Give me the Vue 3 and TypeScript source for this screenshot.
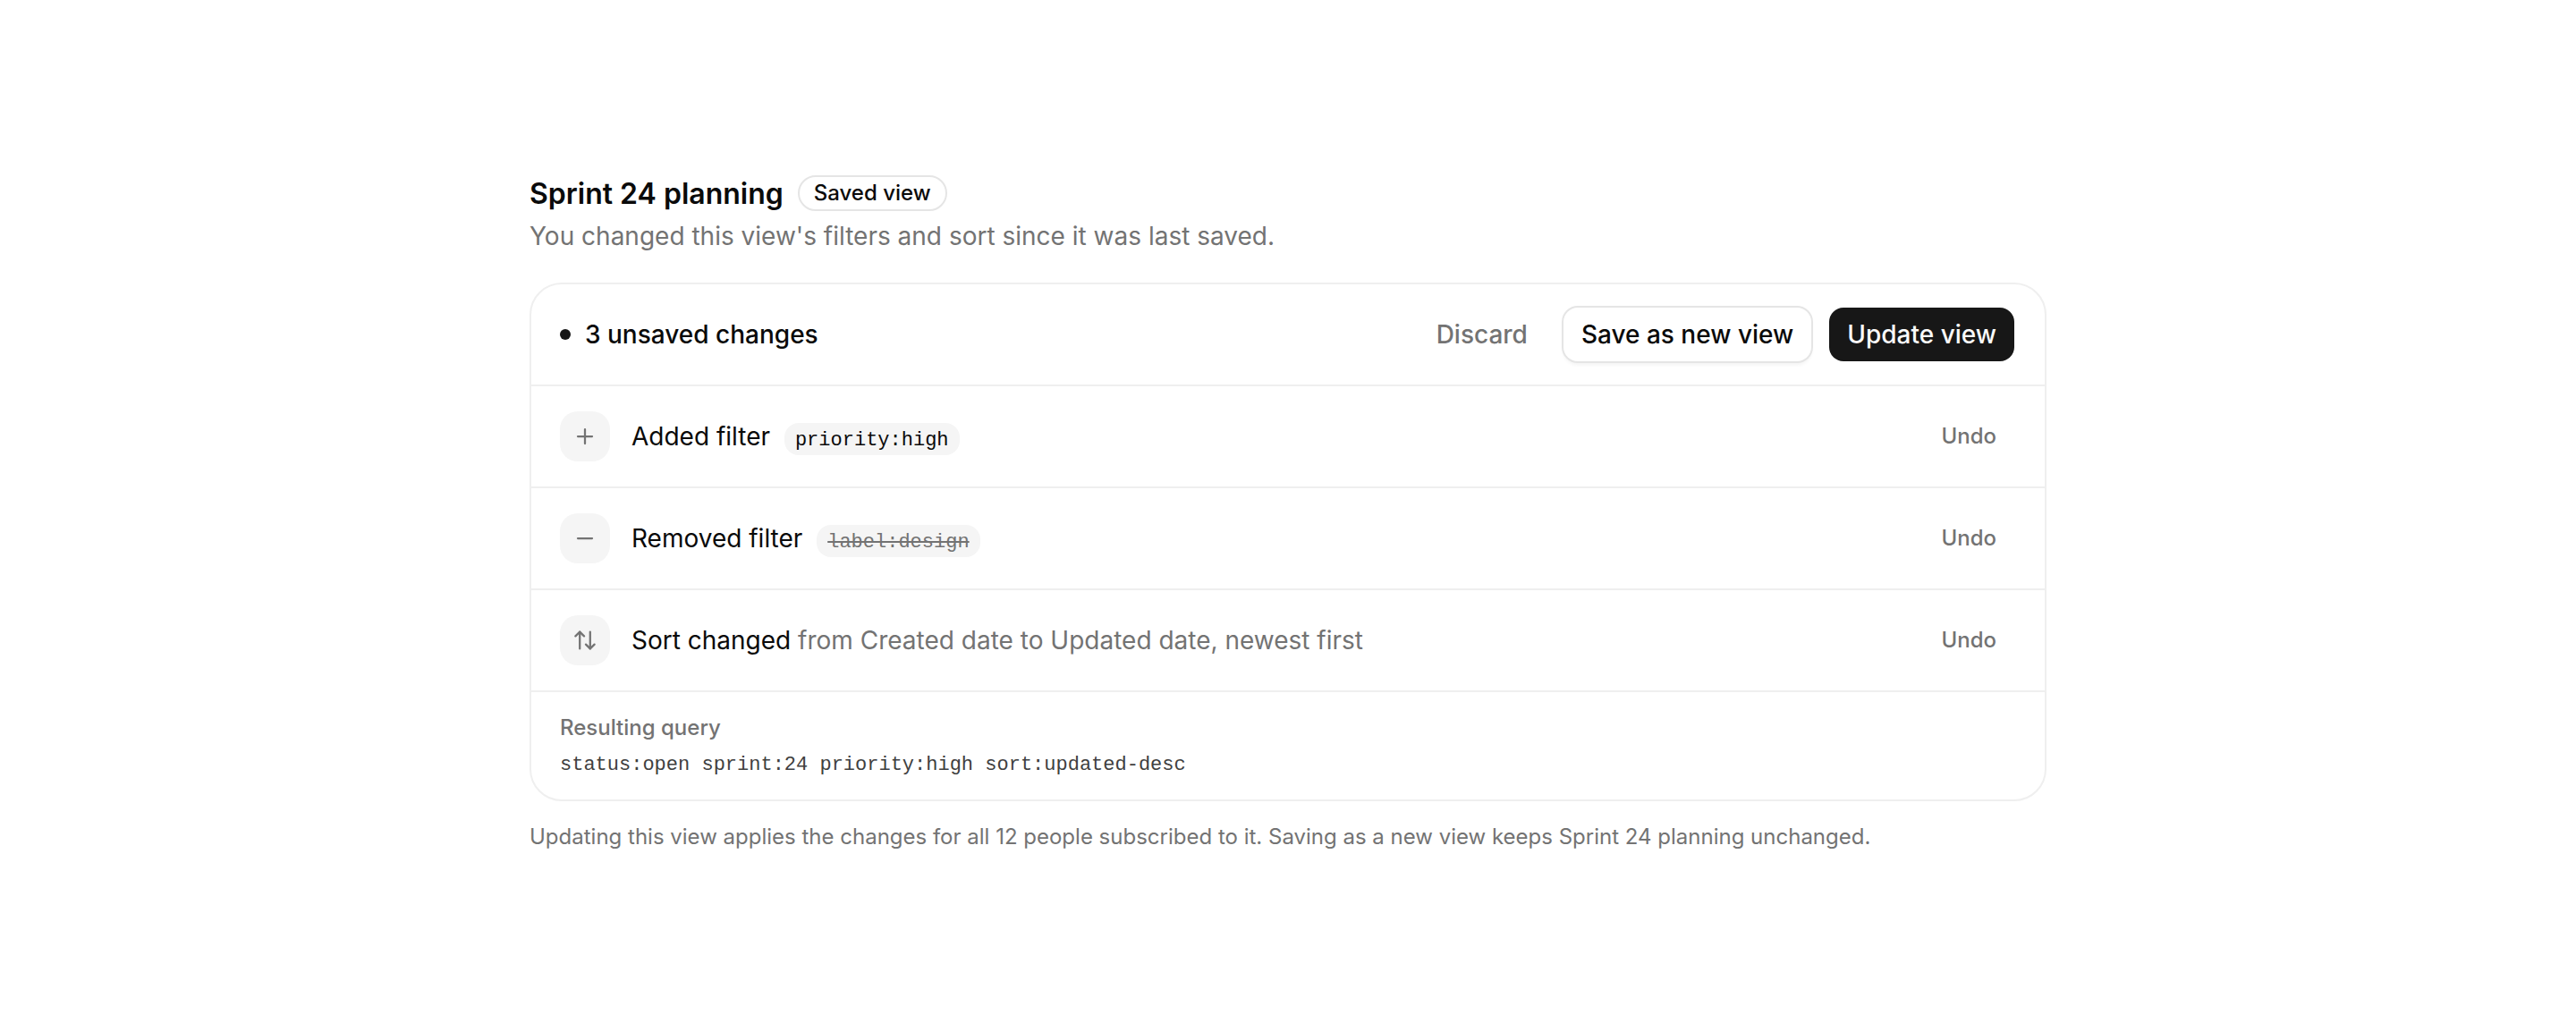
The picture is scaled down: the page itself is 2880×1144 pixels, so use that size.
<script setup lang="ts">
interface Change {
  id: number
  kind: 'added' | 'removed' | 'sorted'
  label: string
  token?: string
  detail?: string
}

const changes: Change[] = [
  { id: 1, kind: 'added', label: 'Added filter', token: 'priority:high' },
  { id: 2, kind: 'removed', label: 'Removed filter', token: 'label:design' },
  { id: 3, kind: 'sorted', label: 'Sort changed', detail: 'from Created date to Updated date, newest first' },
]

const iconPaths: Record<Change['kind'], string[]> = {
  added: ['M4 12h16', 'M12 4v16'],
  removed: ['M4 12h16'],
  sorted: ['M6.2 21.4V2.6', 'M1.4 7.4l4.8-4.8L11 7.4', 'M17.8 2.6v18.8', 'M13 16.6l4.8 4.8 4.8-4.8'],
}

const query = 'status:open sprint:24 priority:high sort:updated-desc'
</script>

<template>
  <main class="page">
    <header class="heading">
      <div class="title-row">
        <h1 class="title">Sprint 24 planning</h1>
        <span class="badge">Saved view</span>
      </div>
      <p class="subtitle">You changed this view's filters and sort since it was last saved.</p>
    </header>

    <section class="card">
      <div class="bar">
        <span class="dot" aria-hidden="true"></span>
        <h2 class="count">{{ changes.length }} unsaved changes</h2>
        <div class="actions">
          <button type="button" class="btn ghost">Discard</button>
          <button type="button" class="btn outline">Save as new view</button>
          <button type="button" class="btn primary">Update view</button>
        </div>
      </div>

      <ul class="changes">
        <li v-for="change in changes" :key="change.id" class="change">
          <span class="tile" aria-hidden="true">
            <svg class="icon" viewBox="0 0 24 24">
              <path v-for="d in iconPaths[change.kind]" :key="d" :d="d" />
            </svg>
          </span>
          <p class="text">
            {{ change.label }}
            <code v-if="change.token" class="chip" :class="{ struck: change.kind === 'removed' }">{{ change.token }}</code>
            <span v-if="change.detail" class="detail">{{ change.detail }}</span>
          </p>
          <button type="button" class="btn ghost small">Undo</button>
        </li>
      </ul>

      <div class="result">
        <h3 class="result-label">Resulting query</h3>
        <code class="query">{{ query }}</code>
      </div>
    </section>

    <p class="note">
      Updating this view applies the changes for all 12 people subscribed to it. Saving as a new view keeps Sprint 24
      planning unchanged.
    </p>
  </main>
</template>

<style>
body {
  background: #fff;
}
</style>

<style scoped>
.page {
  box-sizing: border-box;
  max-width: 1760px;
  margin: 0 auto;
  padding: 196px 32px 192px;
  font-family: Inter, 'Liberation Sans', sans-serif;
  font-size: 28px;
  line-height: 40px;
  color: #0a0a0a;
}

h1,
h2,
h3,
p,
ul {
  margin: 0;
  padding: 0;
}

.heading {
  display: flex;
  flex-direction: column;
  gap: 6px;
  margin-bottom: 32px;
}

.title-row {
  display: flex;
  align-items: flex-start;
  gap: 16px;
}

.title {
  font-size: 32px;
  line-height: 42px;
  font-weight: 600;
}

.badge {
  box-sizing: border-box;
  padding: 2px 16px;
  border: 2px solid #e5e5e5;
  border-radius: 20px;
  font-size: 24px;
  line-height: 32px;
  font-weight: 500;
}

.subtitle,
.detail {
  color: #737373;
}

.card {
  border: 2px solid #efefef;
  border-radius: 36px;
}

.bar {
  display: flex;
  align-items: center;
  gap: 16px;
  padding: 26px 34px 26px 32px;
}

.dot {
  width: 12px;
  height: 12px;
  border-radius: 50%;
  background: #171717;
}

.count {
  font-size: 28px;
  font-weight: 500;
}

.actions {
  display: flex;
  gap: 20px;
  margin-left: auto;
}

.btn {
  padding: 10px 20px;
  border: 0;
  border-radius: 16px;
  background: transparent;
  font: inherit;
  font-weight: 500;
  color: #0a0a0a;
  cursor: pointer;
}

.ghost {
  color: #737373;
}

.outline {
  background: #fff;
  box-shadow: 0 0 0 2px #e5e5e5, 0 4px 4px rgba(0, 0, 0, 0.05);
}

.primary {
  background: #171717;
  color: #fafafa;
}

.small {
  margin-left: auto;
  font-size: 24px;
  line-height: 32px;
}

.changes {
  list-style: none;
}

.change {
  display: flex;
  align-items: center;
  gap: 24px;
  padding: 28px 34px 28px 32px;
  border-top: 2px solid #efefef;
}

.tile {
  display: flex;
  flex: none;
  align-items: center;
  justify-content: center;
  width: 56px;
  height: 56px;
  border-radius: 20px;
  background: #f5f5f5;
}

.icon {
  width: 24px;
  height: 24px;
  fill: none;
  stroke: #737373;
  stroke-width: 2.25;
  stroke-linecap: round;
  stroke-linejoin: round;
}

.chip,
.query {
  font-family: 'Liberation Mono', monospace;
  font-size: 22px;
}

.chip {
  display: inline-block;
  margin-left: 8px;
  padding: 8px 12px 4px;
  border-radius: 16px;
  background: #f5f5f5;
  line-height: 24px;
}

.struck {
  color: #737373;
  text-decoration: line-through;
}

.result {
  display: flex;
  flex-direction: column;
  gap: 8px;
  padding: 24px 32px 20px;
  border-top: 2px solid #efefef;
}

.result-label {
  font-size: 24px;
  line-height: 32px;
  font-weight: 500;
  color: #737373;
}

.query {
  line-height: 36px;
  color: #404040;
}

.note {
  margin-top: 24px;
  font-size: 24px;
  line-height: 32px;
  color: #737373;
}
</style>
